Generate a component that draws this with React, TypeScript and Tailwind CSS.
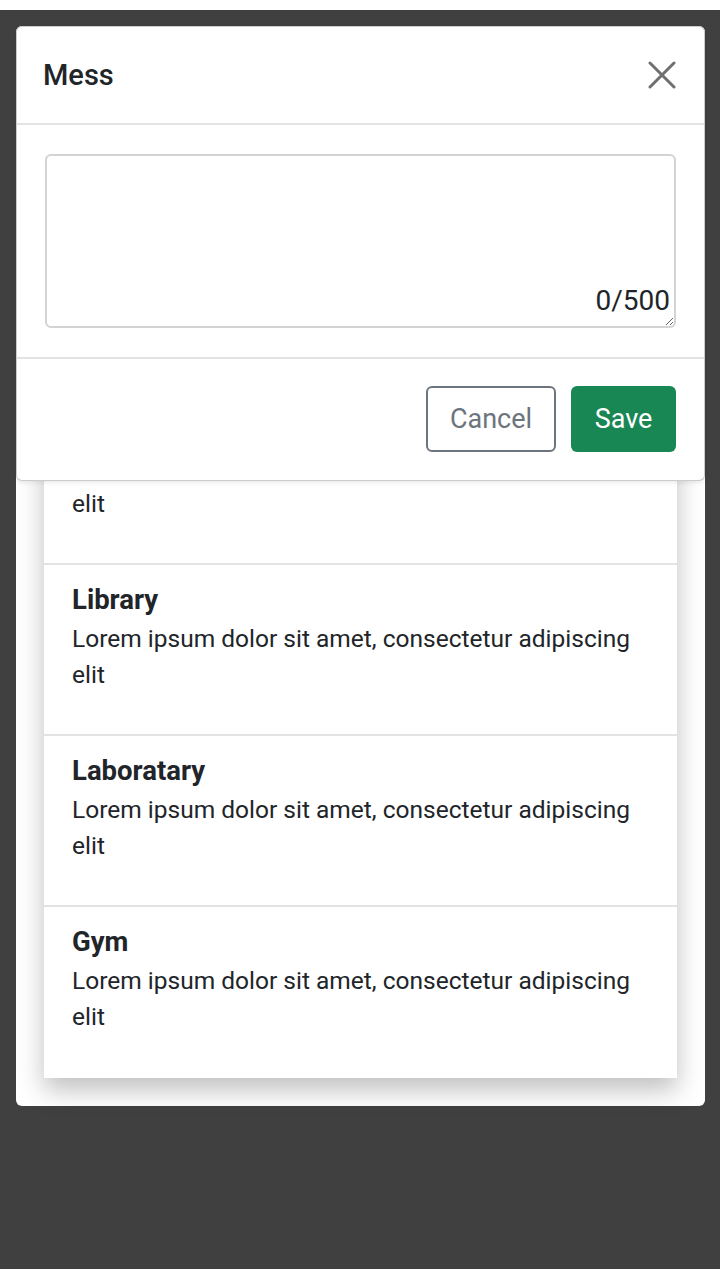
const items = [
  { title: "Mess", text: "Lorem ipsum dolor sit amet, consectetur adipiscing elit" },
  { title: "Library", text: "Lorem ipsum dolor sit amet, consectetur adipiscing elit" },
  { title: "Laboratary", text: "Lorem ipsum dolor sit amet, consectetur adipiscing elit" },
  { title: "Gym", text: "Lorem ipsum dolor sit amet, consectetur adipiscing elit" },
];

const App = () => {
  return (
    <div className="relative min-h-[1269px] bg-[#404040] font-['Roboto','Liberation_Sans',sans-serif] text-[#212529]">
      <div className="h-[10px] bg-white" />

      {/* Page card under the modal */}
      <div className="px-[16px] pt-[16px]">
        <div className="w-[689px] rounded-[6px] bg-white px-[28px] pt-[368px] pb-[28px]">
          <div className="bg-white shadow-[0_12px_24px_rgba(0,0,0,0.25)]">
            {items.map((item, i) => (
              <div
                key={item.title}
                className={`px-[28px] pt-[17px] ${i === items.length - 1 ? "pb-[20px]" : "pb-[18px]"} ${i > 0 ? "border-t-2 border-[#e2e3e5]" : ""}`}
              >
                <h3 className="text-[27.5px] font-bold leading-[36px]">{item.title}</h3>
                <p className="mt-[3px] mb-[23px] text-[24.5px] leading-[36px]">{item.text}</p>
              </div>
            ))}
          </div>
        </div>
      </div>

      {/* Modal */}
      <div className="absolute top-[26px] left-[16px] w-[689px] overflow-hidden rounded-[6px] border border-black/20 bg-white shadow-[0_2px_4px_rgba(0,0,0,0.08)]">
        <div className="flex h-[98px] items-center justify-between border-b-2 border-[#e2e3e5] pr-[28px] pl-[26px]">
          <h2 className="text-[29px] font-medium leading-[44px]">Mess</h2>
          <button className="flex h-[28px] w-[28px] items-center justify-center">
            <svg width="28" height="28" viewBox="0 0 28 28">
              <path d="M2 2 L26 26 M26 2 L2 26" stroke="#6f6f6f" strokeWidth="3" strokeLinecap="round" fill="none" />
            </svg>
          </button>
        </div>

        <div className="px-[28px] py-[29px]">
          <div className="relative">
            <textarea className="block h-[174px] w-full rounded-[6px] border-2 border-[#d3d3d3] px-[18px] py-[10px] text-[24px] outline-none" />
            <span className="absolute right-[6px] bottom-[9px] text-[28px] leading-[36px] text-[#212529]">0/500</span>
          </div>
        </div>

        <div className="flex justify-end gap-[15px] border-t-2 border-[#e2e3e5] px-[28px] pt-[27px] pb-[28px]">
          <button className="h-[66px] w-[130px] rounded-[6px] border-2 border-[#6c757d] text-[27px] text-[#6c757d]">
            Cancel
          </button>
          <button className="h-[66px] w-[105px] rounded-[6px] bg-[#198754] text-[27px] text-white">
            Save
          </button>
        </div>
      </div>
    </div>
  );
};

export default App;
